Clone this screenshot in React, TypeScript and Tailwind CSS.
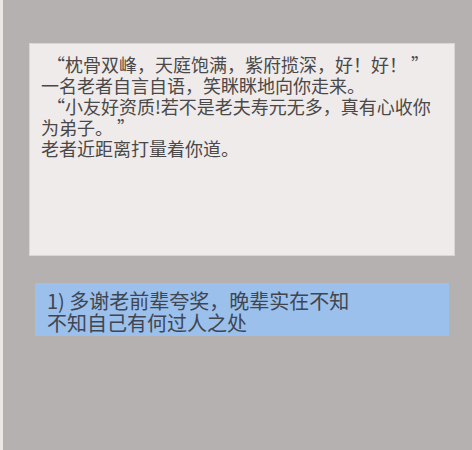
export default function App() {
  const font = { fontFamily: '"Noto Sans CJK SC", "Noto Sans", sans-serif' }

  return (
    <div lang="zh-CN" className="flex h-[450px] w-[472px] overflow-hidden" style={font}>
      {/* left edge strip */}
      <div className="w-[3px] shrink-0 bg-[#ebe8e6]" />

      <div className="flex flex-1 flex-col bg-[#b5b1b0] pt-[43px]">
        {/* story text */}
        <div className="ml-[26px] h-[213px] w-[426px] border border-[#dad6d5] bg-[#efebea] px-[11px] pt-[10px] text-[18px] leading-[21px] text-[#4a4848]">
          <p className="pl-[6px]">“枕骨双峰，天庭饱满，紫府揽深，好！好！ ”</p>
          <p>一名老者自言自语，笑眯眯地向你走来。</p>
          <p className="pl-[6px]">“小友好资质!若不是老夫寿元无多，真有心收你</p>
          <p>为弟子。 ”</p>
          <p>老者近距离打量着你道。</p>
        </div>

        {/* choice */}
        <button className="mt-[27px] ml-[32px] h-[53px] w-[414px] bg-[#9bc0ec] px-[12px] pt-[5px] text-left text-[20px] leading-[22px] text-[#3f4652]">
          <span className="block">1) 多谢老前辈夸奖，晚辈实在不知</span>
          <span className="block">不知自己有何过人之处</span>
        </button>
      </div>
    </div>
  )
}
